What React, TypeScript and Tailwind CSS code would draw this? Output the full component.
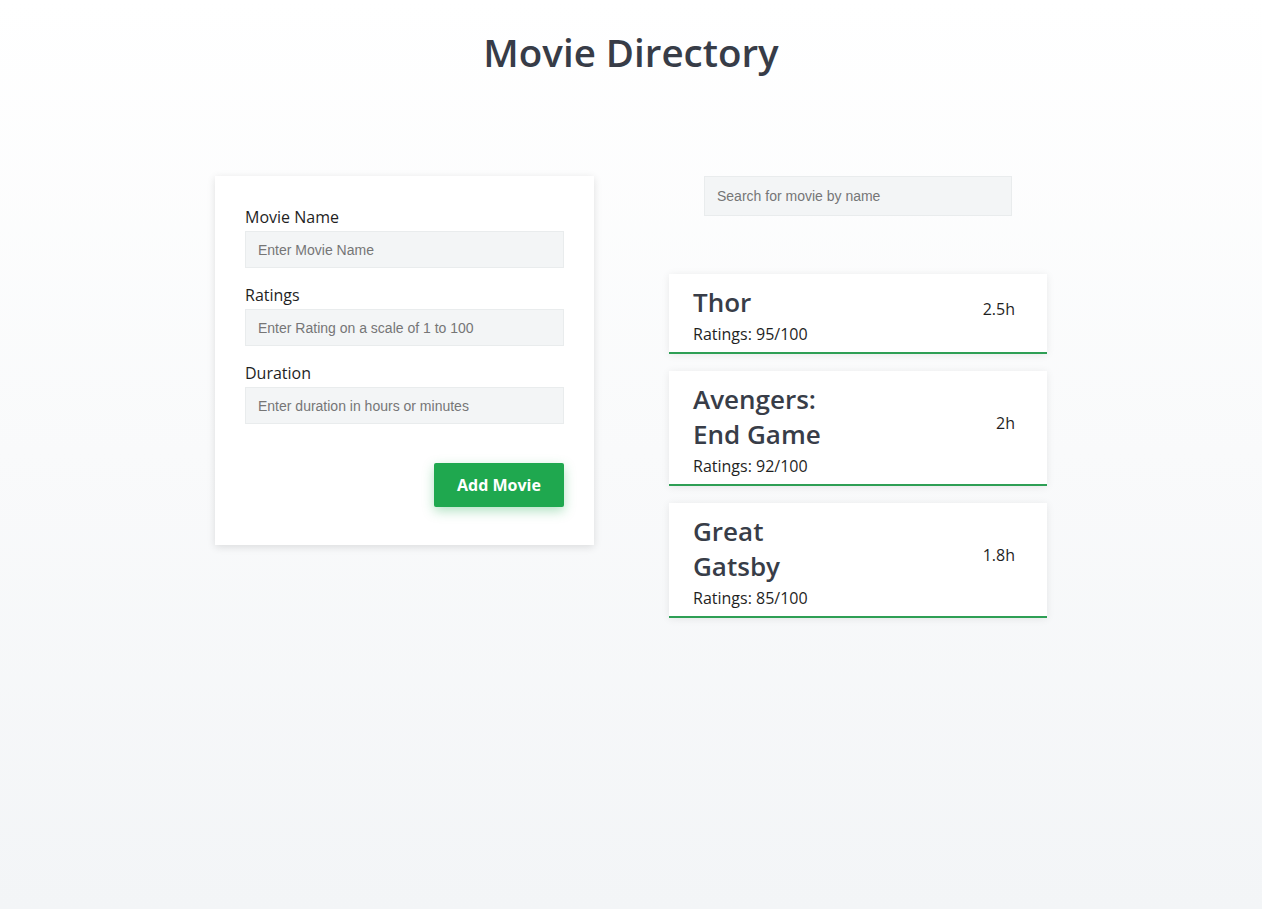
import React, { useState } from 'react';

type Movie = { name: string; rating: number; duration: string };

const MOVIES: Movie[] = [
  { name: 'Thor', rating: 95, duration: '2.5h' },
  { name: 'Avengers: End Game', rating: 92, duration: '2h' },
  { name: 'Great Gatsby', rating: 85, duration: '1.8h' },
];

const inputCls =
  "w-full h-[37px] px-3 bg-[#f3f5f6] border border-[#e9eced] text-sm text-[#333] font-['Liberation_Sans',Arial,sans-serif] placeholder-[#767676] outline-none";

const Field = ({ label, placeholder, value, onChange }: { label: string; placeholder: string; value: string; onChange: (v: string) => void }) => (
  <div className="flex flex-col">
    <label className="text-base leading-6 text-[#1f1f1f] mb-[2px]">{label}</label>
    <input value={value} onChange={(e) => onChange(e.target.value)} placeholder={placeholder} className={inputCls} />
  </div>
);

const App: React.FC = () => {
  const [name, setName] = useState('');
  const [rating, setRating] = useState('');
  const [duration, setDuration] = useState('');
  const [search, setSearch] = useState('');

  const list = MOVIES.filter((m) => m.name.toLowerCase().includes(search.toLowerCase()));

  return (
    <div className="min-h-screen bg-gradient-to-b from-[#ffffff] to-[#f3f5f7] font-['Open_Sans','Noto_Sans',sans-serif]">
      <h1 className="pt-[26px] text-center text-[38.5px] leading-[52px] font-semibold text-[#373c47]">Movie Directory</h1>

      <div className="flex justify-center items-start gap-[75px] mt-[98px]">
        {/* FORM */}
        <div className="w-[379px] bg-white shadow-[0_2px_8px_rgba(0,0,0,0.12)] px-[30px] pt-[29px] pb-[38px]">
          <div className="flex flex-col gap-[15px]">
            <Field label="Movie Name" placeholder="Enter Movie Name" value={name} onChange={setName} />
            <Field label="Ratings" placeholder="Enter Rating on a scale of 1 to 100" value={rating} onChange={setRating} />
            <Field label="Duration" placeholder="Enter duration in hours or minutes" value={duration} onChange={setDuration} />
          </div>
          <div className="flex justify-end mt-[39px]">
            <button className="w-[130px] h-[44px] rounded-[2px] bg-[#1fa84f] text-white text-base font-bold shadow-[0_4px_12px_rgba(31,168,79,0.35)]">
              Add Movie
            </button>
          </div>
        </div>

        {/* LIST */}
        <div className="w-[378px] flex flex-col items-center">
          <input
            value={search}
            onChange={(e) => setSearch(e.target.value)}
            placeholder="Search for movie by name"
            className="w-[308px] h-[40px] px-3 bg-[#f3f5f6] border border-[#e9eced] text-sm text-[#333] font-['Liberation_Sans',Arial,sans-serif] placeholder-[#767676] outline-none"
          />
          <div className="w-full flex flex-col gap-[17px] mt-[58px]">
            {list.map((m) => (
              <div
                key={m.name}
                className="flex items-center justify-between bg-white border-b-2 border-[#2e9f55] shadow-[0_1px_8px_rgba(0,0,0,0.08)] pl-6 pr-8 pt-[11px] pb-[6px]"
              >
                <div className="flex flex-col">
                  <div className="w-[140px] text-[26px] leading-[35px] font-semibold text-[#383d48]">{m.name}</div>
                  <div className="mt-[2px] text-base leading-6 text-[#1f1f1f]">Ratings: {m.rating}/100</div>
                </div>
                <div className="text-base text-[#1f1f1f] -mt-[14px]">{m.duration}</div>
              </div>
            ))}
          </div>
        </div>
      </div>
    </div>
  );
};

export default App;
